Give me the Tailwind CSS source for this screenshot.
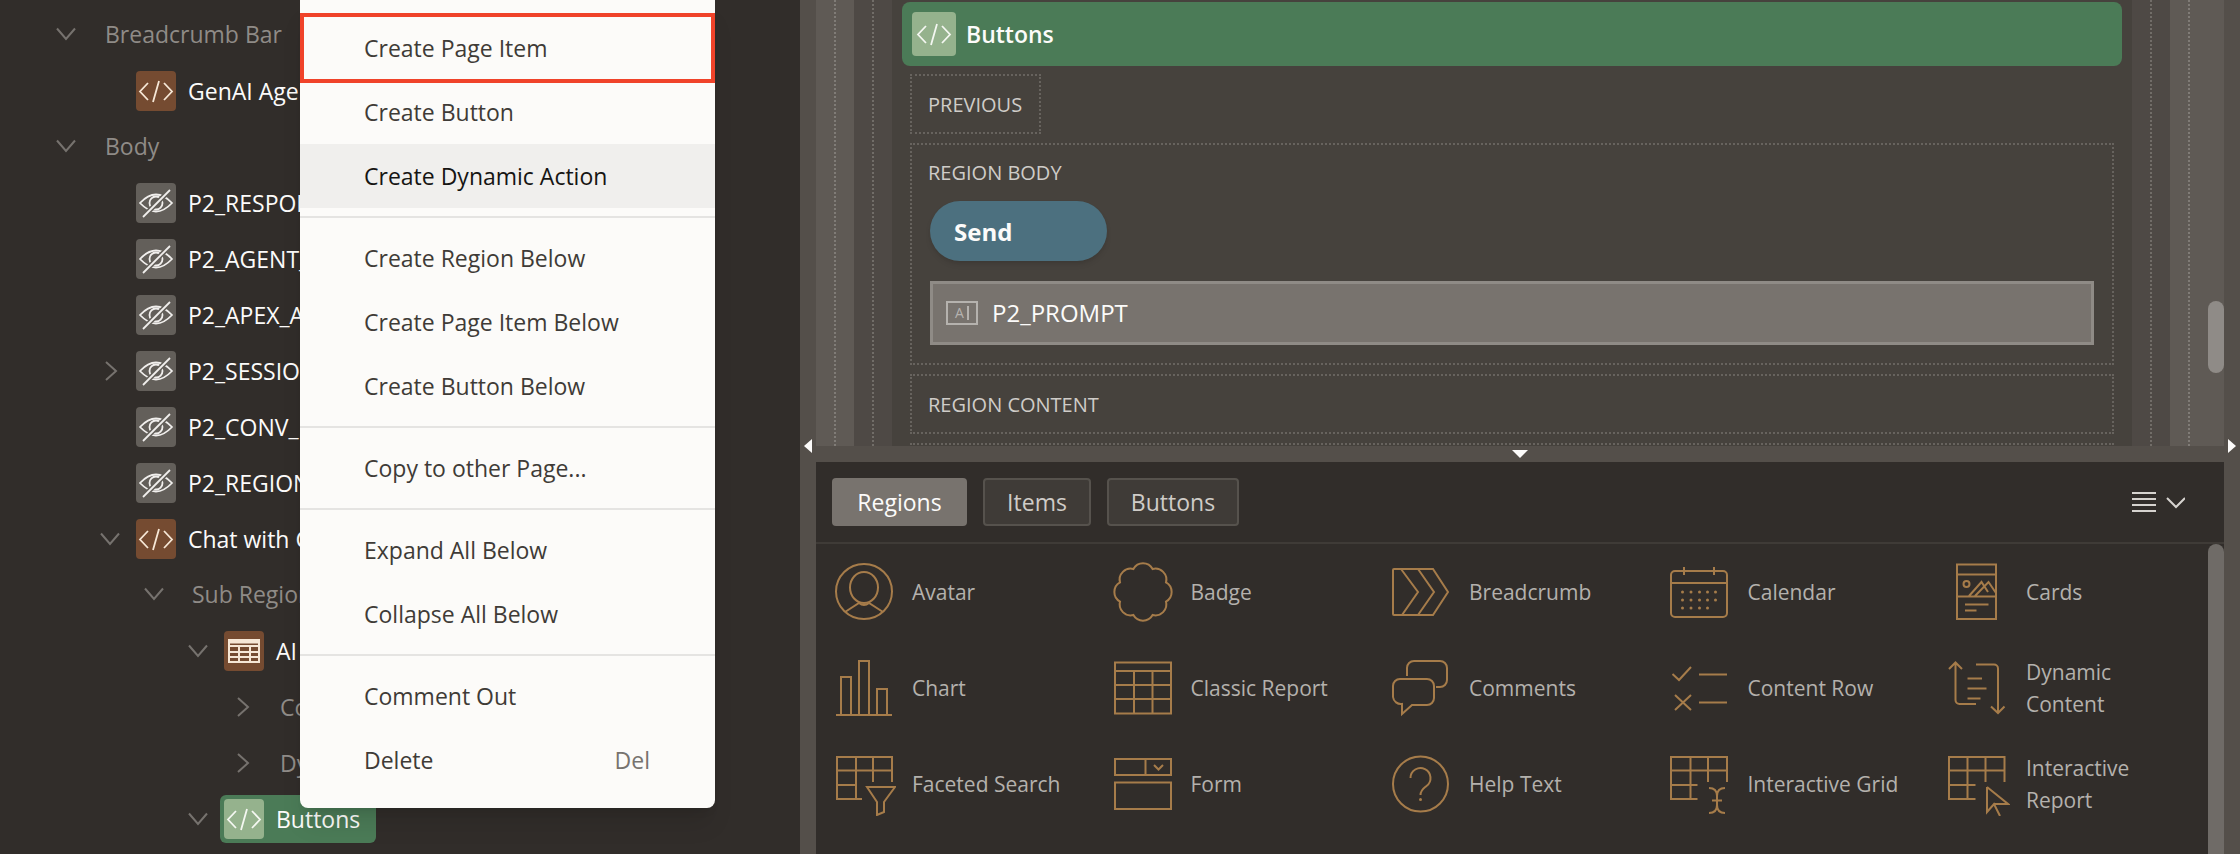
<!DOCTYPE html>
<html lang="en">
<head>
  <meta charset="UTF-8">
  <title>Page Designer</title>
  <script src="https://cdn.jsdelivr.net/npm/@tailwindcss/browser@4"></script>
</head>
<body class="bg-[#312d2a] font-['Open_Sans',sans-serif] overflow-hidden">
  <svg class="hidden">
    <symbol id="down" viewBox="0 0 20 20"><path d="M1 4.500 10 15 19 4.500" fill="none" stroke="currentColor" stroke-width="2"/></symbol>
    <symbol id="right" viewBox="0 0 20 20"><path d="M6 1 16 10 6 19" fill="none" stroke="currentColor" stroke-width="2"/></symbol>
    <symbol id="code" viewBox="0 0 40 40"><path d="M12 12 4 20.500 12 29M28 12 36 20.500 28 29M23 10 17 31" fill="none" stroke="currentColor" stroke-width="1.800"/></symbol>
    <symbol id="eye" viewBox="0 0 40 40"><path d="M4 20Q20 3 36 20 20 37 4 20Z" fill="none" stroke="currentColor" stroke-width="1.800"/><circle cx="20" cy="20" r="6.500" fill="none" stroke="currentColor" stroke-width="1.800"/><path d="M7 34 34 7" stroke="#635f5a" stroke-width="5"/><path d="M7 34 34 7" stroke="currentColor" stroke-width="1.800"/></symbol>
  </svg>

  <div class="relative flex w-[2240px] h-[854px] overflow-hidden">
    <!-- tree -->
    <div class="w-[800px] shrink-0 pt-[7px] text-[23px] text-[#fcfbfa] whitespace-nowrap">
      <div class="h-14 flex items-center pl-14 pb-[2px] text-[#8f8b87]"><svg class="w-5 h-5 text-[#76726e] mr-[29px]"><use href="#down"/></svg>Breadcrumb Bar</div>
      <div class="h-14 flex items-center pl-[136px]"><span class="w-10 h-10 rounded bg-[#754b31] text-[#f6e7d6] mr-3"><svg class="w-10 h-10"><use href="#code"/></svg></span>GenAI Agent</div>
      <div class="h-14 flex items-center pl-14 pb-[2px] text-[#8f8b87]"><svg class="w-5 h-5 text-[#76726e] mr-[29px]"><use href="#down"/></svg>Body</div>
      <div class="h-14 flex items-center pl-[136px]"><span class="w-10 h-10 rounded bg-[#635f5a] text-[#f1efed] mr-3"><svg class="w-10 h-10"><use href="#eye"/></svg></span>P2_RESPONSE</div>
      <div class="h-14 flex items-center pl-[136px]"><span class="w-10 h-10 rounded bg-[#635f5a] text-[#f1efed] mr-3"><svg class="w-10 h-10"><use href="#eye"/></svg></span>P2_AGENT_ID</div>
      <div class="h-14 flex items-center pl-[136px]"><span class="w-10 h-10 rounded bg-[#635f5a] text-[#f1efed] mr-3"><svg class="w-10 h-10"><use href="#eye"/></svg></span>P2_APEX_APP</div>
      <div class="h-14 flex items-center pl-[100px]"><svg class="w-5 h-5 text-[#76726e] mr-4"><use href="#right"/></svg><span class="w-10 h-10 rounded bg-[#635f5a] text-[#f1efed] mr-3"><svg class="w-10 h-10"><use href="#eye"/></svg></span>P2_SESSION</div>
      <div class="h-14 flex items-center pl-[136px]"><span class="w-10 h-10 rounded bg-[#635f5a] text-[#f1efed] mr-3"><svg class="w-10 h-10"><use href="#eye"/></svg></span>P2_CONV_ID</div>
      <div class="h-14 flex items-center pl-[136px]"><span class="w-10 h-10 rounded bg-[#635f5a] text-[#f1efed] mr-3"><svg class="w-10 h-10"><use href="#eye"/></svg></span>P2_REGION</div>
      <div class="h-14 flex items-center pl-[100px]"><svg class="w-5 h-5 text-[#76726e] mr-4"><use href="#down"/></svg><span class="w-10 h-10 rounded bg-[#754b31] text-[#f6e7d6] mr-3"><svg class="w-10 h-10"><use href="#code"/></svg></span>Chat with G</div>
      <div class="h-14 flex items-center pl-36 pb-[2px] text-[#8f8b87]"><svg class="w-5 h-5 text-[#76726e] mr-7"><use href="#down"/></svg>Sub Regions</div>
      <div class="h-14 flex items-center pl-[188px]"><svg class="w-5 h-5 text-[#76726e] mr-4"><use href="#down"/></svg><span class="w-10 h-10 rounded bg-[#754b31] mr-3 flex items-center justify-center"><svg class="w-10 h-10" viewBox="0 0 40 40" fill="none" stroke="#f6e7d6" stroke-width="2"><path d="M5 9H35V31H5ZM5 15H35M5 21H35M5 26H35M15 15V31M26 15V31"/><path d="M5 11H35" stroke-width="3"/></svg></span>AI Response</div>
      <div class="h-14 flex items-center pl-[232px] text-[#8f8b87]"><svg class="w-5 h-5 text-[#76726e] mr-7"><use href="#right"/></svg>Columns</div>
      <div class="h-14 flex items-center pl-[232px] text-[#8f8b87]"><svg class="w-5 h-5 text-[#76726e] mr-7"><use href="#right"/></svg>Dynamic</div>
      <div class="h-14 flex items-center pl-[188px]">
        <svg class="w-5 h-5 text-[#76726e] mr-3"><use href="#down"/></svg>
        <span class="w-[156px] h-12 rounded-md bg-[#4b7b57] flex items-center pl-1"><span class="w-10 h-10 rounded bg-[#95b28d] text-[#f4f7f1] mr-3"><svg class="w-10 h-10"><use href="#code"/></svg></span>Buttons</span>
      </div>
    </div>

    <!-- layout editor and gallery -->
    <div class="w-[16px] shrink-0 bg-[#544f4a]"></div>
    <div class="w-[1408px] shrink-0 flex flex-col">
      <div class="h-[446px] flex overflow-hidden bg-[#46423d]">
        <div class="w-[38px] bg-[#5f5a55] pl-[18px]"><div class="h-full border-l-2 border-dotted border-[#807c77]"></div></div>
        <div class="w-[38px] bg-[#4e4945] pl-[18px]"><div class="h-full border-l-2 border-dotted border-[#716d68]"></div></div>
        <div class="w-[1240px] pt-[2px] pl-[10px] pr-[10px]">
          <div class="h-16 w-[1220px] rounded-lg bg-[#4b7b57] flex items-center pl-[10px] text-[23px] font-semibold text-[#fcfbfa]"><span class="w-11 h-11 rounded bg-[#95b28d] text-[#f4f7f1] mr-[10px] flex items-center justify-center"><svg class="w-10 h-10"><use href="#code"/></svg></span>Buttons</div>
          <div class="mt-2 ml-2 w-[131px] h-[60px] border-2 border-dotted border-[#67635e] flex items-center pl-4 pt-[2px] text-[20px] text-[#cfccc8]">PREVIOUS</div>
          <div class="mt-[9px] ml-2 w-[1204px] h-[222px] border-2 border-dotted border-[#67635e] pl-[18px]">
            <div class="h-14 -ml-[2px] flex items-center text-[20px] text-[#cfccc8]">REGION BODY</div>
            <div class="w-[177px] h-[60px] rounded-full bg-[#4c707f] shadow-md flex items-center pl-6 pt-[2px] text-[24px] font-bold text-[#fcfbfa]">Send</div>
            <div class="mt-5 w-[1164px] h-16 bg-[#78736e] border-[3px] border-[#8f8b86] flex items-center pl-[13px] text-[24px] text-[#fcfbfa]">
              <span class="w-8 h-6 border-2 border-[#b5b2ae] flex items-center justify-center gap-[3px] mr-[14px] text-[14px] leading-none text-[#b5b2ae]">A<span class="w-[2px] h-[14px] bg-[#b5b2ae]"></span></span>P2_PROMPT
            </div>
          </div>
          <div class="mt-[9px] ml-2 w-[1204px] h-[60px] border-2 border-dotted border-[#67635e] flex items-center pl-4 pt-[2px] text-[20px] text-[#cfccc8]">REGION CONTENT</div>
          <div class="mt-[9px] ml-2 w-[1204px] h-[60px] border-2 border-dotted border-[#67635e]"></div>
        </div>
        <div class="w-[38px] bg-[#4e4945] pl-[18px]"><div class="h-full border-l-2 border-dotted border-[#716d68]"></div></div>
        <div class="w-[54px] bg-[#5f5a55] pl-[18px] relative"><div class="h-full border-l-2 border-dotted border-[#807c77]"></div><div class="absolute right-0 top-[301px] w-4 h-[72px] rounded-full bg-[#8f8b87]"></div></div>
      </div>
      <div class="h-4 bg-[#544f4a] flex justify-center">
        <svg class="w-4 h-2 mt-[4px]" viewBox="0 0 16 8"><path d="M0 0H16L8 8Z" fill="#fcfbfa"/></svg>
      </div>
      <div class="flex-1 relative">
        <div class="h-[82px] border-b-2 border-[#3f3b37] flex items-center pl-4 pr-[39px] text-[23px]">
          <span class="w-[135px] h-12 rounded bg-[#78736e] text-[#fcfbfa] flex items-center justify-center">Regions</span>
          <span class="ml-4 w-[108px] h-12 rounded border-2 border-[#56524d] bg-[#3f3b37] text-[#cfccc8] flex items-center justify-center">Items</span>
          <span class="ml-4 w-[132px] h-12 rounded border-2 border-[#56524d] bg-[#3f3b37] text-[#cfccc8] flex items-center justify-center">Buttons</span>
          <svg class="ml-auto w-[53px] h-5" viewBox="0 0 53 20" fill="none" stroke="#d6d3cf" stroke-width="2"><path d="M0 1H24M0 7H24M0 13H24M0 19H24M35 6 44 15 53 6"/></svg>
        </div>
        <div class="absolute right-0 top-[82px] bottom-0 w-4 rounded-t-full bg-[#6f6b67]"></div>
        <div class="grid grid-cols-[repeat(5,278.5px)] grid-rows-[repeat(3,96px)] pl-4 text-[21px] leading-8 text-[#b4b1ad]">
          <div class="flex items-center gap-4"><svg class="w-16 h-16 shrink-0" viewBox="0 0 64 64" fill="none" stroke="#a67c4a" stroke-width="2"><ellipse cx="32" cy="31.500" rx="28" ry="27.500"/><ellipse cx="32" cy="27.500" rx="14" ry="15.500"/><path d="M13 52 27 43Q32 47 37 43L51 52"/></svg>Avatar</div>
          <div class="flex items-center gap-4"><svg class="w-16 h-16 shrink-0" viewBox="0 0 64 64" fill="none" stroke="#a67c4a" stroke-width="2"><path d="M22.400 9A11 11 0 0 1 41.600 9 11 11 0 0 1 55 22.400 11 11 0 0 1 55 41.600 11 11 0 0 1 41.600 55 11 11 0 0 1 22.400 55 11 11 0 0 1 9 41.600 11 11 0 0 1 9 22.400 11 11 0 0 1 22.400 9Z"/></svg>Badge</div>
          <div class="flex items-center gap-4"><svg class="w-16 h-16 shrink-0" viewBox="0 0 64 64" fill="none" stroke="#a67c4a" stroke-width="2"><path d="M5 9H44L59 32 44 55H5C4.400 55 4 54.600 4 54V10C4 9.400 4.400 9 5 9ZM12 9 29 32 13 55M29 9 45 32 29 55"/></svg>Breadcrumb</div>
          <div class="flex items-center gap-4"><svg class="w-16 h-16 shrink-0" viewBox="0 0 64 64" fill="none" stroke="#a67c4a" stroke-width="2"><path d="M7 11H55A4 4 0 0 1 59 15V53A4 4 0 0 1 55 57H7A4 4 0 0 1 3 53V15A4 4 0 0 1 7 11ZM3 23H59M16 7V15M46 7V15"/><g fill="#a67c4a" stroke="none"><circle cx="14.500" cy="32" r="1.500"/><circle cx="23" cy="32" r="1.500"/><circle cx="31.500" cy="32" r="1.500"/><circle cx="39.500" cy="32" r="1.500"/><circle cx="47.500" cy="32" r="1.500"/><circle cx="14.500" cy="40" r="1.500"/><circle cx="23" cy="40" r="1.500"/><circle cx="31.500" cy="40" r="1.500"/><circle cx="39.500" cy="40" r="1.500"/><circle cx="47.500" cy="40" r="1.500"/><circle cx="14.500" cy="48" r="1.500"/><circle cx="23" cy="48" r="1.500"/><circle cx="31.500" cy="48" r="1.500"/><circle cx="39.500" cy="48" r="1.500"/></g></svg>Calendar</div>
          <div class="flex items-center gap-4"><svg class="w-16 h-16 shrink-0" viewBox="0 0 64 64" fill="none" stroke="#a67c4a" stroke-width="2"><path d="M11 4.500H50V59H11ZM11 14.500H50M11 36.500H50M23 36 35.500 22 42 32M29 36 42.500 22 50 33M19 44.500H42.500M19 50.500H30.500"/><circle cx="20.500" cy="24" r="3"/></svg>Cards</div>

          <div class="flex items-center gap-4"><svg class="w-16 h-16 shrink-0" viewBox="0 0 64 64" fill="none" stroke="#a67c4a" stroke-width="2"><path d="M4 59H60M9 59V21H19V59M27 59V5H37V59M45 59V33H55V59"/></svg>Chart</div>
          <div class="flex items-center gap-4"><svg class="w-16 h-16 shrink-0" viewBox="0 0 64 64" fill="none" stroke="#a67c4a" stroke-width="2"><path d="M4 6.500H60V57.500H4ZM4 15H60M4 29H60M4 43H60M23 15V57.500M41.500 15V57.500"/></svg>Classic Report</div>
          <div class="flex items-center gap-4"><svg class="w-16 h-16 shrink-0" viewBox="0 0 64 64" fill="none" stroke="#a67c4a" stroke-width="2"><path d="M18 20V12A7 7 0 0 1 25 5H51A7 7 0 0 1 58 12V24A7 7 0 0 1 51 31H47M11 23H38A7 7 0 0 1 45 30V42A7 7 0 0 1 38 49H23L13 58V48A8 8 0 0 1 4 41V30A7 7 0 0 1 11 23Z"/></svg>Comments</div>
          <div class="flex items-center gap-4"><svg class="w-16 h-16 shrink-0" viewBox="0 0 64 64" fill="none" stroke="#a67c4a" stroke-width="2"><path d="M4.500 18 11 24 23 11M31 18.500H59M7 39 23 54M23 39 7 54M31 46.500H59"/></svg>Content Row</div>
          <div class="flex items-center gap-4"><svg class="w-16 h-16 shrink-0" viewBox="0 0 64 64" fill="none" stroke="#a67c4a" stroke-width="2"><path d="M3 13 9.500 6.500 16 13M9.500 7V44A4 4 0 0 0 13.500 48H30M30 8.500H48A4 4 0 0 1 52 12.500V57M45 50.500 52 57 58.500 50.500M21.500 22.500H36M21.500 32.500H40.500M21.500 42.500H34.500"/></svg><span>Dynamic<br>Content</span></div>

          <div class="flex items-center gap-4"><svg class="w-16 h-16 shrink-0" viewBox="0 0 64 64" fill="none" stroke="#a67c4a" stroke-width="2"><path d="M60 30V5H5V47H30M5 18.500H60M5 33H24M24 5V47M41 5V30M35 35H63L52 50V60L45 63V50Z"/></svg>Faceted Search</div>
          <div class="flex items-center gap-4"><svg class="w-16 h-16 shrink-0" viewBox="0 0 64 64" fill="none" stroke="#a67c4a" stroke-width="2"><path d="M4 7H60V23H4ZM34.500 7V23M4 30.500H60V57H4ZM43 13 47.500 17.500 52 13"/></svg>Form</div>
          <div class="flex items-center gap-4"><svg class="w-16 h-16 shrink-0" viewBox="0 0 64 64" fill="none" stroke="#a67c4a" stroke-width="2"><ellipse cx="31.500" cy="32" rx="27.500" ry="27.500"/><path d="M21.500 26A10 10 0 1 1 37.500 34C34.500 36.500 31.500 38 31.500 43"/><circle cx="31.500" cy="47.500" r="1.500" fill="#a67c4a" stroke="none"/></svg>Help Text</div>
          <div class="flex items-center gap-4"><svg class="w-16 h-16 shrink-0" viewBox="0 0 64 64" fill="none" stroke="#a67c4a" stroke-width="2"><path d="M59 30V5H3V47H29.500M3 18.500H59M3 33H29.500M22.500 5V47M40 5V30M41 36Q49 36 49 44V53Q49 61 41 61M57 36Q49 36 49 44M49 53Q49 61 57 61M44 48.500H54"/></svg>Interactive Grid</div>
          <div class="flex items-center gap-4"><svg class="w-16 h-16 shrink-0" viewBox="0 0 64 64" fill="none" stroke="#a67c4a" stroke-width="2"><path d="M58.500 30V5H3V47H29.500M3 18.500H58.500M3 33H29.500M21.500 5V47M39.500 5V30M41 35V60L48 52 54 64M41 35 62 52H48"/></svg><span>Interactive<br>Report</span></div>
        </div>
      </div>
    </div>
    <div class="w-[16px] shrink-0 bg-[#544f4a]"></div>

    <!-- splitter arrows -->
    <svg class="absolute left-[804px] top-[439px] w-2 h-[14px]" viewBox="0 0 8 14"><path d="M8 0V14L0 7Z" fill="#fcfbfa"/></svg>
    <svg class="absolute left-[2228px] top-[439px] w-2 h-[14px]" viewBox="0 0 8 14"><path d="M0 0V14L8 7Z" fill="#fcfbfa"/></svg>

    <!-- context menu -->
    <div class="absolute left-[300px] top-0 w-[415px] h-[808px] rounded-b-lg bg-[#fcfbf9] shadow-xl py-4 text-[23px] text-[#3f3b37] whitespace-nowrap">
      <div class="h-16 flex items-center pl-[64px]">Create Page Item</div>
      <div class="h-16 flex items-center pl-[64px]">Create Button</div>
      <div class="h-16 flex items-center pl-[64px] bg-[#f0efed] text-[#161513]">Create Dynamic Action</div>
      <div class="my-2 h-[2px] bg-[#e5e4e2]"></div>
      <div class="h-16 flex items-center pl-[64px]">Create Region Below</div>
      <div class="h-16 flex items-center pl-[64px]">Create Page Item Below</div>
      <div class="h-16 flex items-center pl-[64px]">Create Button Below</div>
      <div class="my-2 h-[2px] bg-[#e5e4e2]"></div>
      <div class="h-16 flex items-center pl-[64px]">Copy to other Page...</div>
      <div class="my-2 h-[2px] bg-[#e5e4e2]"></div>
      <div class="h-16 flex items-center pl-[64px]">Expand All Below</div>
      <div class="h-16 flex items-center pl-[64px]">Collapse All Below</div>
      <div class="my-2 h-[2px] bg-[#e5e4e2]"></div>
      <div class="h-16 flex items-center pl-[64px]">Comment Out</div>
      <div class="h-16 flex items-center justify-between pl-[64px] pr-[65px]">Delete<span class="text-[#77736f]">Del</span></div>
      <div class="absolute left-0 top-[13px] w-[415px] h-[70px] border-4 border-[#f0432a]"></div>
    </div>
  </div>
</body>
</html>
